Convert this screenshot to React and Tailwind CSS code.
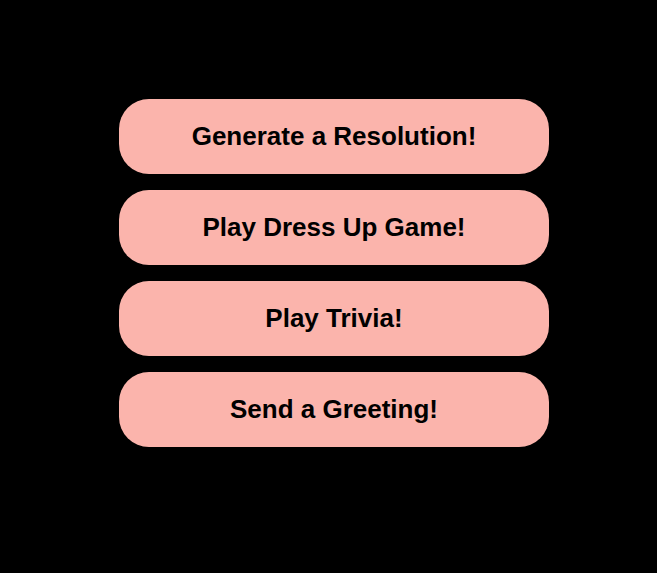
import React from 'react';

const items = ['Generate a Resolution!', 'Play Dress Up Game!', 'Play Trivia!', 'Send a Greeting!'];

const App = () => {
  return (
    <div className="w-full h-[573px] bg-black pt-[99px] pl-[119px]" style={{ fontFamily: '"Liberation Sans", Arial, sans-serif' }}>
      <div className="flex flex-col gap-[16px] w-[430px]">
        {items.map((label) => (
          <button
            key={label}
            className="h-[75px] w-full rounded-[30px] bg-[#fbb4ac] text-black text-[26px] font-bold flex items-center justify-center"
          >
            {label}
          </button>
        ))}
      </div>
    </div>
  );
};

export default App;
